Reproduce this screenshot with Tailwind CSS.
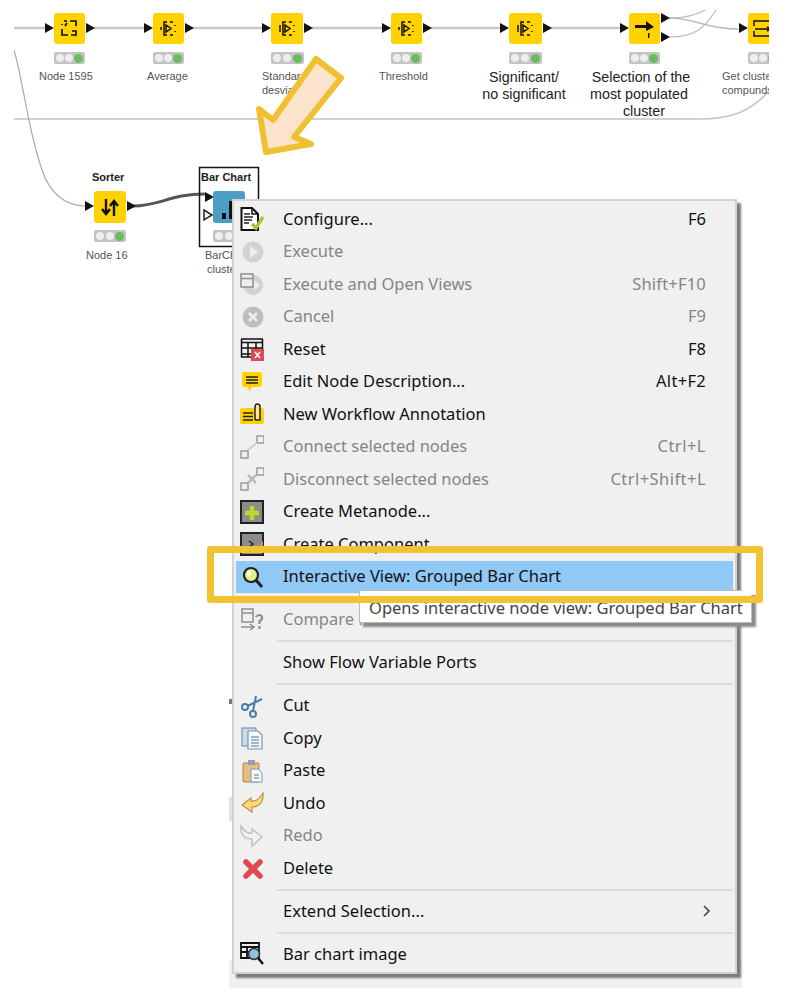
<!DOCTYPE html>
<html lang="en">
<head>
<meta charset="UTF-8" />
<title>Workflow context menu</title>
<script src="https://cdn.jsdelivr.net/npm/@tailwindcss/browser@4"></script>
</head>
<body class="bg-white">
<div class="relative w-[789px] h-[998px] overflow-hidden bg-white">

  <!-- workflow canvas -->
  <div class="absolute inset-0 [clip-path:inset(0_20px_0_14px)] font-['Liberation_Sans',sans-serif] text-[#555]">
    <svg class="absolute left-0 top-0" width="789" height="998" fill="none">
      <defs>
        <path id="port" d="M0 -5L9 0L0 5Z" fill="#111" />
      </defs>
      <g stroke="#c8c8c8" stroke-width="2.500">
        <path d="M14 28H45M94 28H144M193 28H262M312 28H382M431 28H500M550 28H620" />
      </g>
      <path d="M14 119H700C730 119 750 112 768 92" stroke="#c4c4c4" stroke-width="1.600" />
      <path d="M14 50C24 85 28 130 42 170C50 194 66 206 85 206" stroke="#aaa" stroke-width="1.200" />
      <path d="M133 206C160 206 170 194 205 194" stroke="#555" stroke-width="3" />
      <path d="M669 18C695 18 705 29 738 29" stroke="#bbb" stroke-width="1.400" />
      <path d="M669 37C695 37 705 28 716 10M669 18C685 18 695 16 705 10" stroke="#bbb" stroke-width="1.200" />
      <use href="#port" x="45" y="28" /><use href="#port" x="86" y="28" />
      <use href="#port" x="144" y="28" /><use href="#port" x="185" y="28" />
      <use href="#port" x="262" y="28" /><use href="#port" x="304" y="28" />
      <use href="#port" x="382" y="28" /><use href="#port" x="423" y="28" />
      <use href="#port" x="500" y="28" /><use href="#port" x="543" y="28" />
      <use href="#port" x="620" y="28" /><use href="#port" x="661" y="18" /><use href="#port" x="661" y="37" />
      <use href="#port" x="739" y="28" />
      <use href="#port" x="85" y="206" /><use href="#port" x="127" y="206" />
      <use href="#port" x="205" y="197" />
      <path d="M204 210L212 215L204 220Z" fill="#fff" stroke="#222" stroke-width="1.500" />
      <rect x="199.500" y="167.500" width="59" height="79" stroke="#111" stroke-width="1.500" />
    </svg>

    <!-- nodes -->
    <div class="absolute left-[54px] top-[13px] w-[31px] h-[31px] rounded-[3px] bg-[#ffd200] flex items-center justify-center">
      <svg width="17" height="17" viewBox="0 0 17 17" fill="none" stroke="#111" stroke-width="1.700"><path d="M3 1H6M9 1H15V6M1 4V5M6 3L4 6M1 9V15H7M10 15H15V11H11" /></svg>
    </div>
    <div class="absolute left-[153px] top-[13px] w-[31px] h-[31px] rounded-[3px] bg-[#ffd200] flex items-center justify-center">
      <svg width="17" height="17" viewBox="0 0 17 17" fill="none" stroke="#111" stroke-width="1.500"><path d="M7 2H4V15H7M10 2H13M10 15H13M15 5V6M15 11V12M1 7V10M6 5L11 8.500L6 12Z" /></svg>
    </div>
    <div class="absolute left-[271px] top-[13px] w-[32px] h-[31px] rounded-[3px] bg-[#ffd200] flex items-center justify-center">
      <svg width="17" height="17" viewBox="0 0 17 17" fill="none" stroke="#111" stroke-width="1.500"><path d="M7 2H4V15H7M10 2H13M10 15H13M15 5V6M15 11V12M1 5V12M6 5L11 8.500L6 12Z" /></svg>
    </div>
    <div class="absolute left-[391px] top-[13px] w-[31px] h-[31px] rounded-[3px] bg-[#ffd200] flex items-center justify-center">
      <svg width="17" height="17" viewBox="0 0 17 17" fill="none" stroke="#111" stroke-width="1.500"><path d="M7 2H4V15H7M10 2H13M10 15H13M15 5V6M15 11V12M1 7V10M6 5L11 8.500L6 12Z" /></svg>
    </div>
    <div class="absolute left-[509px] top-[13px] w-[33px] h-[31px] rounded-[3px] bg-[#ffd200] flex items-center justify-center">
      <svg width="17" height="17" viewBox="0 0 17 17" fill="none" stroke="#111" stroke-width="1.500"><path d="M7 2H4V15H7M10 2H13M10 15H13M15 5V6M15 11V12M1 5V12M6 5L11 8.500L6 12Z" /></svg>
    </div>
    <div class="absolute left-[629px] top-[13px] w-[31px] h-[31px] rounded-[3px] bg-[#ffd200] flex items-center justify-center">
      <svg width="21" height="19" viewBox="0 0 21 19" fill="#111"><path d="M1 6H12V2L20 8L12 12V9H1Z" /><path d="M14 14H15.500V19H14Z" /></svg>
    </div>
    <div class="absolute left-[748px] top-[13px] w-[31px] h-[31px] rounded-[3px] bg-[#ffd200] flex items-center justify-center">
      <svg width="21" height="19" viewBox="0 0 21 19" fill="none" stroke="#111" stroke-width="1.500"><path d="M20 2H1V7M1 12V17H20M2 10H17M14 8L18 10L14 12" /></svg>
    </div>
    <div class="absolute left-[94px] top-[191px] w-[32px] h-[32px] rounded-[3px] bg-[#ffd200] flex items-center justify-center">
      <svg width="18" height="17" viewBox="0 0 18 17" fill="none" stroke="#111" stroke-width="2.400"><path d="M5 0V15M1 10L5 15L9 10M13 17V2M9 7L13 2L17 7" /></svg>
    </div>
    <div class="absolute left-[213px] top-[191px] w-[32px] h-[32px] rounded-[3px] bg-[#4b9fc2] flex items-end justify-center pb-[4px]">
      <svg width="14" height="20" viewBox="0 0 14 20" fill="#111"><rect x="0" y="14" width="4" height="6" /><rect x="7" y="2" width="4" height="18" /></svg>
    </div>

    <!-- traffic lights -->
    <div class="absolute left-[54px] top-[52px] w-[31px] h-[12px] rounded-[2px] bg-[#c4c4c4] flex items-center justify-between px-[2px]"><i class="size-[8px] rounded-full bg-[#eee]"></i><i class="size-[8px] rounded-full bg-[#eee]"></i><i class="size-[9px] rounded-full bg-[#68bd5c]"></i></div>
    <div class="absolute left-[153px] top-[52px] w-[31px] h-[12px] rounded-[2px] bg-[#c4c4c4] flex items-center justify-between px-[2px]"><i class="size-[8px] rounded-full bg-[#eee]"></i><i class="size-[8px] rounded-full bg-[#eee]"></i><i class="size-[9px] rounded-full bg-[#68bd5c]"></i></div>
    <div class="absolute left-[271px] top-[52px] w-[33px] h-[12px] rounded-[2px] bg-[#c4c4c4] flex items-center justify-between px-[2px]"><i class="size-[8px] rounded-full bg-[#eee]"></i><i class="size-[8px] rounded-full bg-[#eee]"></i><i class="size-[9px] rounded-full bg-[#68bd5c]"></i></div>
    <div class="absolute left-[391px] top-[52px] w-[31px] h-[12px] rounded-[2px] bg-[#c4c4c4] flex items-center justify-between px-[2px]"><i class="size-[8px] rounded-full bg-[#eee]"></i><i class="size-[8px] rounded-full bg-[#eee]"></i><i class="size-[9px] rounded-full bg-[#68bd5c]"></i></div>
    <div class="absolute left-[509px] top-[52px] w-[33px] h-[12px] rounded-[2px] bg-[#c4c4c4] flex items-center justify-between px-[2px]"><i class="size-[8px] rounded-full bg-[#eee]"></i><i class="size-[8px] rounded-full bg-[#eee]"></i><i class="size-[9px] rounded-full bg-[#68bd5c]"></i></div>
    <div class="absolute left-[629px] top-[52px] w-[31px] h-[12px] rounded-[2px] bg-[#c4c4c4] flex items-center justify-between px-[2px]"><i class="size-[8px] rounded-full bg-[#eee]"></i><i class="size-[8px] rounded-full bg-[#eee]"></i><i class="size-[9px] rounded-full bg-[#68bd5c]"></i></div>
    <div class="absolute left-[748px] top-[52px] w-[31px] h-[12px] rounded-[2px] bg-[#c4c4c4] flex items-center justify-between px-[2px]"><i class="size-[8px] rounded-full bg-[#eee]"></i><i class="size-[8px] rounded-full bg-[#eee]"></i><i class="size-[9px] rounded-full bg-[#68bd5c]"></i></div>
    <div class="absolute left-[94px] top-[230px] w-[32px] h-[12px] rounded-[2px] bg-[#c4c4c4] flex items-center justify-between px-[2px]"><i class="size-[8px] rounded-full bg-[#eee]"></i><i class="size-[8px] rounded-full bg-[#eee]"></i><i class="size-[9px] rounded-full bg-[#68bd5c]"></i></div>
    <div class="absolute left-[213px] top-[230px] w-[32px] h-[12px] rounded-[2px] bg-[#c4c4c4] flex items-center justify-between px-[2px]"><i class="size-[8px] rounded-full bg-[#eee]"></i><i class="size-[8px] rounded-full bg-[#eee]"></i><i class="size-[9px] rounded-full bg-[#68bd5c]"></i></div>

    <!-- node labels -->
    <p class="absolute left-[39px] top-[69px] text-[11px] leading-[14px] whitespace-nowrap">Node 1595</p>
    <p class="absolute left-[147px] top-[69px] text-[11px] leading-[14px] whitespace-nowrap">Average</p>
    <p class="absolute left-[262px] top-[69px] text-[11px] leading-[14px] whitespace-nowrap">Standard<br />desviation</p>
    <p class="absolute left-[379px] top-[69px] text-[11px] leading-[14px] whitespace-nowrap">Threshold</p>
    <p class="absolute left-[480px] top-[69px] w-[88px] text-center text-[14.300px] leading-[17px] text-[#222] whitespace-nowrap">Significant/<br />no significant</p>
    <p class="absolute left-[589px] top-[69px] w-[104px] text-center text-[14.300px] leading-[17px] text-[#222] whitespace-nowrap">Selection of the<br /><span class="-ml-[4px]">most populated</span><br /><span class="ml-[6px]">cluster</span></p>
    <p class="absolute left-[722px] top-[69px] text-[11px] leading-[14px] whitespace-nowrap">Get cluster<br />compunds</p>
    <p class="absolute left-[92px] top-[170px] text-[11px] leading-[14px] font-bold text-[#222] whitespace-nowrap">Sorter</p>
    <p class="absolute left-[86px] top-[248px] text-[11px] leading-[14px] whitespace-nowrap">Node 16</p>
    <p class="absolute left-[201px] top-[170px] text-[11px] leading-[14px] font-bold text-[#222] whitespace-nowrap">Bar Chart</p>
    <p class="absolute left-[205px] top-[248px] text-[11px] leading-[14px] whitespace-nowrap">BarChart<br /><span class="ml-[2px]">cluster</span></p>
  </div>

  <!-- faint panel behind the menu -->
  <div class="absolute left-[229px] top-[960px] w-[513px] h-[28px] bg-[#f0f0f0]"></div>
  <div class="absolute left-[229px] top-[797px] w-[4px] h-[24px] bg-[#e2e2e2]"></div>
  <div class="absolute left-[229px] top-[699px] w-[3px] h-[5px] bg-[#777]"></div>

  <!-- context menu -->
  <div class="absolute left-[232px] top-[199px] w-[505px] h-[775px] border-2 border-[#d2d2d2] bg-[#f0f0f0] shadow-[4px_4px_2px_#7c7c7c] pt-[2px] font-['Noto_Sans',sans-serif] text-[16.500px] text-[#111]">

    <div class="flex items-center h-[32.500px] pr-[29px]">
      <span class="w-[49px] pl-[6px] shrink-0"><svg class="block" width="24" height="24" viewBox="0 0 24 24" fill="none"><path d="M1.500 1H12L18 7V23H1.500Z" fill="#fff" stroke="#111" stroke-width="2" /><path d="M12 1V7H18" stroke="#111" stroke-width="1.500" /><path d="M4 7H10M4 10H13M4 13H12M4 16H9" stroke="#222" stroke-width="1.500" /><path d="M12 17L16 21L23 10" stroke="#a8c83c" stroke-width="3.500" /></svg></span>
      <span class="flex-1">Configure...</span><span>F6</span>
    </div>
    <div class="flex items-center h-[32.500px] pr-[29px] text-[#858585]">
      <span class="w-[49px] pl-[6px] shrink-0"><svg class="block" width="24" height="24" viewBox="0 0 24 24"><circle cx="13" cy="12" r="10.500" fill="#d2d2d2" /><path d="M10 6L18 12L10 18Z" fill="#efefef" /></svg></span>
      <span class="flex-1">Execute</span>
    </div>
    <div class="flex items-center h-[32.500px] pr-[29px] text-[#858585]">
      <span class="w-[49px] pl-[6px] shrink-0"><svg class="block" width="24" height="24" viewBox="0 0 24 24" fill="none"><circle cx="13" cy="13" r="10" fill="#d2d2d2" /><path d="M14 8L20 13L14 18Z" fill="#efefef" /><rect x="1" y="2" width="12" height="13" fill="#efefef" stroke="#8e8e8e" stroke-width="1.500" /><path d="M1 6.500H13" stroke="#8e8e8e" stroke-width="1.500" /></svg></span>
      <span class="flex-1">Execute and Open Views</span><span class="tracking-[0.2px]">Shift+F10</span>
    </div>
    <div class="flex items-center h-[32.500px] pr-[29px] text-[#858585]">
      <span class="w-[49px] pl-[6px] shrink-0"><svg class="block" width="24" height="24" viewBox="0 0 24 24" fill="none"><circle cx="13" cy="12" r="10.500" fill="#bdbdbd" /><path d="M9 8L17 16M17 8L9 16" stroke="#efefef" stroke-width="2.500" /></svg></span>
      <span class="flex-1">Cancel</span><span>F9</span>
    </div>
    <div class="flex items-center h-[32.500px] pr-[29px]">
      <span class="w-[49px] pl-[6px] shrink-0"><svg class="block" width="24" height="24" viewBox="0 0 24 24" fill="none"><path d="M1 2H23M1 5.500H23M1 11H23M1 17H12M1.500 2V20M8 5.500V20M16 5.500V12M22.500 2V12M1 20H12" stroke="#111" stroke-width="1.500" /><rect x="11" y="12" width="13" height="12" fill="#e04a55" /><path d="M15 15L20 21M20 15L15 21" stroke="#fff" stroke-width="1.500" /></svg></span>
      <span class="flex-1">Reset</span><span>F8</span>
    </div>
    <div class="flex items-center h-[32.500px] pr-[29px]">
      <span class="w-[49px] pl-[6px] shrink-0"><svg class="block" width="24" height="24" viewBox="0 0 24 24" fill="none"><path d="M4 2H19Q22 2 22 5V14Q22 17 19 17H12L9 22L8 17H4Q2 17 2 14V5Q2 2 4 2Z" fill="#ffd200" /><path d="M6 7H18M6 10H18M6 13H18" stroke="#222" stroke-width="1.500" /></svg></span>
      <span class="flex-1">Edit Node Description...</span><span class="tracking-[0.3px]">Alt+F2</span>
    </div>
    <div class="flex items-center h-[32.500px] pr-[29px]">
      <span class="w-[49px] pl-[6px] shrink-0"><svg class="block" width="24" height="24" viewBox="0 0 24 24" fill="none"><rect x="0" y="6" width="24" height="16" rx="2.500" fill="#ffd200" /><path d="M3 11H13M3 14.500H13M3 18H13" stroke="#222" stroke-width="1.500" /><path d="M15 18V5Q15 2 17.500 2Q20 2 20 5V18H15" stroke="#222" stroke-width="1.500" fill="#ffe98a" /></svg></span>
      <span class="flex-1">New Workflow Annotation</span>
    </div>
    <div class="flex items-center h-[32.500px] pr-[29px] text-[#858585]">
      <span class="w-[49px] pl-[6px] shrink-0"><svg class="block" width="24" height="24" viewBox="0 0 24 24" fill="none" stroke="#999" stroke-width="1.500"><rect x="1" y="16" width="7" height="7" /><rect x="17" y="1" width="7" height="7" /><path d="M8 15L17 8" stroke="#ccc" stroke-width="2" /></svg></span>
      <span class="flex-1">Connect selected nodes</span><span class="tracking-[0.5px]">Ctrl+L</span>
    </div>
    <div class="flex items-center h-[32.500px] pr-[29px] text-[#858585]">
      <span class="w-[49px] pl-[6px] shrink-0"><svg class="block" width="24" height="24" viewBox="0 0 24 24" fill="none" stroke="#999" stroke-width="1.500"><rect x="1" y="16" width="7" height="7" /><rect x="17" y="1" width="7" height="7" /><path d="M8 8L16 16M16 8L8 16" stroke="#bbb" stroke-width="2.500" /></svg></span>
      <span class="flex-1">Disconnect selected nodes</span><span class="tracking-[0.45px]">Ctrl+Shift+L</span>
    </div>
    <div class="flex items-center h-[32.500px] pr-[29px]">
      <span class="w-[49px] pl-[6px] shrink-0"><svg class="block" width="24" height="24" viewBox="0 0 24 24" fill="none"><rect x="1" y="1" width="22" height="22" fill="#8c8c8c" stroke="#222" stroke-width="2" /><path d="M12 6V20M5 13H19" stroke="#b6dd2c" stroke-width="4.500" /></svg></span>
      <span class="flex-1">Create Metanode...</span>
    </div>
    <div class="flex items-center h-[32.500px] pr-[29px]">
      <span class="w-[49px] pl-[6px] shrink-0"><svg class="block" width="24" height="24" viewBox="0 0 24 24" fill="none"><rect x="1" y="1" width="22" height="22" fill="#8c8c8c" stroke="#222" stroke-width="2" /><path d="M9 9L13 12L9 15" stroke="#222" stroke-width="1.500" /><path d="M23 9V20H14Z" fill="#f08a24" /></svg></span>
      <span class="flex-1">Create Component...</span>
    </div>
    <div class="flex items-center h-[32.500px] pr-[27px] ml-[2px] mr-[2px] bg-[#90c8f6]">
      <span class="w-[47px] pl-[4px] shrink-0"><svg class="block" width="24" height="24" viewBox="0 0 24 24" fill="none"><circle cx="11" cy="10" r="7" fill="#e6ee8a" stroke="#222" stroke-width="2.200" /><circle cx="9" cy="8" r="2.500" fill="#fbfde0" /><path d="M16 15L22 22" stroke="#222" stroke-width="3" /></svg></span>
      <span class="flex-1">Interactive View: Grouped Bar Chart</span>
    </div>
    <div class="h-[10.500px] ml-[43px] mr-[2px] flex items-center"><div class="w-full h-[2px] bg-[#dcdcdc]"></div></div>
    <div class="flex items-center h-[32.500px] pr-[29px] text-[#858585]">
      <span class="w-[49px] pl-[6px] shrink-0"><svg class="block" width="24" height="24" viewBox="0 0 24 24" fill="none" stroke="#8e8e8e" stroke-width="1.500"><path d="M2 1H13V14H2ZM2 5H13M1 19H13M10 16L14 19L10 22" /><path d="M16 9Q17 7 19.500 7Q22 7 22 10Q22 12 19.500 13V16M19.500 18V21" stroke-width="2.200" /></svg></span>
      <span class="flex-1">Compare Nodes</span>
    </div>
    <div class="h-[10.500px] ml-[43px] mr-[2px] flex items-center"><div class="w-full h-[2px] bg-[#dcdcdc]"></div></div>
    <div class="flex items-center h-[32.500px] pr-[29px]">
      <span class="w-[49px] shrink-0"></span>
      <span class="flex-1">Show Flow Variable Ports</span>
    </div>
    <div class="h-[10.500px] ml-[43px] mr-[2px] flex items-center"><div class="w-full h-[2px] bg-[#dcdcdc]"></div></div>
    <div class="flex items-center h-[32.500px] pr-[29px]">
      <span class="w-[49px] pl-[6px] shrink-0"><svg class="block" width="24" height="24" viewBox="0 0 24 24" fill="none" stroke="#4b7ba6" stroke-width="2"><circle cx="5" cy="13" r="3" /><circle cx="13" cy="20" r="3" /><path d="M7.500 12L22 5M13 17L16 2" /></svg></span>
      <span class="flex-1">Cut</span>
    </div>
    <div class="flex items-center h-[32.500px] pr-[29px]">
      <span class="w-[49px] pl-[6px] shrink-0"><svg class="block" width="24" height="24" viewBox="0 0 24 24" fill="none"><rect x="2" y="2" width="14" height="18" fill="#c9dced" stroke="#7c97ae" stroke-width="1.200" /><path d="M8 5H18L22 9V23H8Z" fill="#f4f8fb" stroke="#7c97ae" stroke-width="1.200" /><path d="M11 11H19M11 14H19M11 17H19M11 20H19" stroke="#4b7ba6" stroke-width="1.200" /></svg></span>
      <span class="flex-1">Copy</span>
    </div>
    <div class="flex items-center h-[32.500px] pr-[29px]">
      <span class="w-[49px] pl-[6px] shrink-0"><svg class="block" width="24" height="24" viewBox="0 0 24 24" fill="none"><rect x="3" y="4" width="16" height="19" rx="1" fill="#e9bd7d" stroke="#a98a5e" /><rect x="8" y="1" width="7" height="5" fill="#8d9fb2" /><path d="M11 10H18L22 14V23H11Z" fill="#f5f8fb" stroke="#7c97ae" /><path d="M14 16H19M14 19H19" stroke="#4b7ba6" /></svg></span>
      <span class="flex-1">Paste</span>
    </div>
    <div class="flex items-center h-[32.500px] pr-[29px]">
      <span class="w-[49px] pl-[6px] shrink-0"><svg class="block" width="24" height="24" viewBox="0 0 24 24"><path d="M2 14L11 7V10C16 11 19 8 23 2C24 10 20 16 12 16V21Z" fill="#fbd77e" stroke="#bd9242" stroke-width="1.200" /></svg></span>
      <span class="flex-1">Undo</span>
    </div>
    <div class="flex items-center h-[32.500px] pr-[29px] text-[#858585]">
      <span class="w-[49px] pl-[6px] shrink-0"><svg class="block" width="24" height="24" viewBox="0 0 24 24"><path d="M22 13L12 5V9C7 10 4 7 1 2C0 10 4 15 12 15V22Z" fill="#f2f2f2" stroke="#c2c2c2" stroke-width="1.500" /></svg></span>
      <span class="flex-1">Redo</span>
    </div>
    <div class="flex items-center h-[32.500px] pr-[29px]">
      <span class="w-[49px] pl-[6px] shrink-0"><svg class="block" width="24" height="24" viewBox="0 0 24 24" fill="none"><path d="M6 6L20 20M20 6L6 20" stroke="#df4a52" stroke-width="5.500" stroke-linecap="round" /></svg></span>
      <span class="flex-1">Delete</span>
    </div>
    <div class="h-[10.500px] ml-[43px] mr-[2px] flex items-center"><div class="w-full h-[2px] bg-[#dcdcdc]"></div></div>
    <div class="flex items-center h-[32.500px] pr-[24px]">
      <span class="w-[49px] shrink-0"></span>
      <span class="flex-1">Extend Selection...</span>
      <svg width="8" height="12" viewBox="0 0 8 12" fill="none" stroke="#444" stroke-width="1.600"><path d="M1 1L6 6L1 11" /></svg>
    </div>
    <div class="h-[10.500px] ml-[43px] mr-[2px] flex items-center"><div class="w-full h-[2px] bg-[#dcdcdc]"></div></div>
    <div class="flex items-center h-[32.500px] pr-[29px]">
      <span class="w-[49px] pl-[6px] shrink-0"><svg class="block" width="24" height="24" viewBox="0 0 24 24" fill="none"><path d="M1 1H19V16H1ZM1 5H19M1 10H10M7 5V16" stroke="#111" stroke-width="1.800" /><circle cx="14" cy="12" r="5.500" fill="#8fc0dc" stroke="#333" stroke-width="1.500" /><path d="M18 16L23 22" stroke="#111" stroke-width="2.500" /></svg></span>
      <span class="flex-1">Bar chart image</span>
    </div>
  </div>

  <!-- tooltip -->
  <div class="absolute left-[359px] top-[590px] w-[393px] h-[33px] bg-white border border-[#bbb] shadow-[4px_4px_2px_#8a8a8a] flex items-end pl-[9px] pb-[1px] font-['Noto_Sans',sans-serif] text-[16.500px] text-[#444] whitespace-nowrap">Opens interactive node view: Grouped Bar Chart</div>

  <!-- callout frame round the hovered row -->
  <div class="absolute left-[207px] top-[546px] w-[556px] h-[57px] rounded-[3px] border-[7px] border-[#f2c230]"></div>
  <div class="absolute left-[214px] top-[553px] w-[18px] h-[42px] bg-white"></div>
  <div class="absolute left-[742px] top-[553px] w-[14px] h-[42px] bg-white"></div>

  <!-- callout arrow -->
  <svg class="absolute left-[250px] top-[50px]" width="100" height="112" viewBox="0 0 100 112"><path d="M66 9L91 28L44 87L61 94L16 102L9 59L23 70Z" fill="#fce4cc" stroke="#f0c030" stroke-width="6" stroke-linejoin="round" /></svg>
</div>
</body>
</html>
